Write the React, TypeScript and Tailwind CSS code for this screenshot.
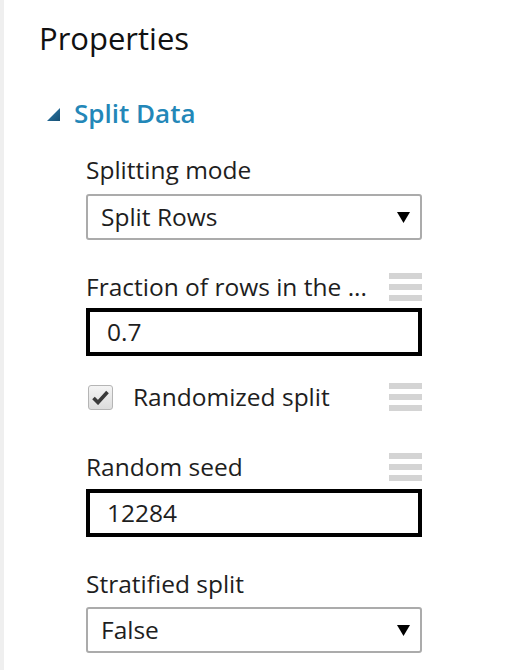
import React from "react";

const font = { fontFamily: '"Open Sans", "Noto Sans", sans-serif' };

function Handle() {
  return (
    <div className="flex flex-col gap-[5px] w-[33px]">
      <div className="h-[6px] bg-[#d4d4d4]" />
      <div className="h-[6px] bg-[#d4d4d4]" />
      <div className="h-[6px] bg-[#d4d4d4]" />
    </div>
  );
}

function Arrow() {
  return (
    <svg width="13" height="11" viewBox="0 0 13 11">
      <polygon points="0,0 13,0 6.5,11" fill="#000" />
    </svg>
  );
}

function Select({ value }: { value: string }) {
  return (
    <div className="h-[46px] w-[336px] border-2 border-[#ababab] rounded-[3px] flex items-center justify-between pl-[13px] pr-[10px] bg-white">
      <span className="text-[24.5px] text-[#1e1e1e] leading-none">{value}</span>
      <Arrow />
    </div>
  );
}

function Input({ value }: { value: string }) {
  return (
    <div className="h-[48px] w-[336px] border-4 border-black flex items-center pl-[17px] bg-white">
      <span className="text-[24.5px] text-[#1e1e1e] leading-none">{value}</span>
    </div>
  );
}

export default function App() {
  return (
    <div className="w-[505px] h-[670px] bg-white border-l-4 border-[#efefef] overflow-hidden" style={font}>
      <div className="pl-[35px] pt-[16px]">
        <div className="text-[31px] leading-[44px] text-[#111]">Properties</div>
        <div className="flex items-center mt-[36px] h-[34px]">
          <svg width="13" height="13" viewBox="0 0 13 13" className="ml-[8px] mt-[2px]">
            <defs>
              <linearGradient id="tg" x1="0" y1="0" x2="1" y2="1">
                <stop offset="0" stopColor="#2f7fb0" />
                <stop offset="1" stopColor="#174f73" />
              </linearGradient>
            </defs>
            <polygon points="13,0 13,13 0,13" fill="url(#tg)" />
          </svg>
          <span className="ml-[14px] text-[26px] font-semibold text-[#2387b8] leading-none">Split Data</span>
        </div>
        <div className="ml-[47px] w-[336px]">
          <div className="mt-[25px] h-[30px] flex items-center text-[24.5px] text-[#1e1e1e]">Splitting mode</div>
          <div className="mt-[9px]">
            <Select value="Split Rows" />
          </div>
          <div className="mt-[32px] h-[30px] flex items-center justify-between">
            <span className="text-[24.5px] text-[#1e1e1e]">Fraction of rows in the ...</span>
            <Handle />
          </div>
          <div className="mt-[6px]">
            <Input value="0.7" />
          </div>
          <div className="mt-[27px] h-[28px] flex items-center justify-between">
            <div className="flex items-center">
              <div className="w-[25px] h-[25px] ml-[2px] rounded-[3px] border border-[#b5b5b5] bg-gradient-to-b from-[#f4f4f4] to-[#dcdcdc] flex items-center justify-center">
                <svg width="17" height="15" viewBox="0 0 17 15">
                  <path d="M1.5 8 L6 12.5 L15.5 2" stroke="#3a3a3a" strokeWidth="3.6" fill="none" strokeLinejoin="miter" />
                </svg>
              </div>
              <span className="ml-[20px] text-[24.5px] text-[#1e1e1e]">Randomized split</span>
            </div>
            <Handle />
          </div>
          <div className="mt-[41px] h-[30px] flex items-center justify-between">
            <span className="text-[24.5px] text-[#1e1e1e]">Random seed</span>
            <Handle />
          </div>
          <div className="mt-[7px]">
            <Input value="12284" />
          </div>
          <div className="mt-[32px] h-[30px] flex items-center text-[24.5px] text-[#1e1e1e]">Stratified split</div>
          <div className="mt-[8px]">
            <Select value="False" />
          </div>
        </div>
      </div>
    </div>
  );
}
